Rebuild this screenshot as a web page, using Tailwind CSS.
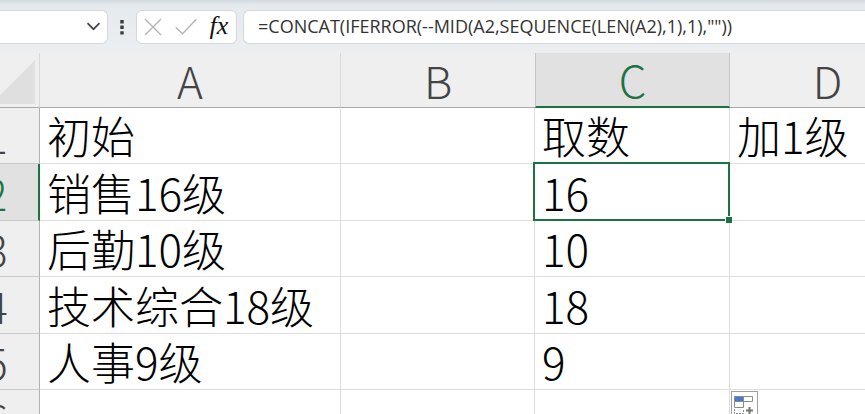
<!DOCTYPE html>
<html lang="zh-CN">
<head>
  <meta charset="UTF-8">
  <title>Workbook</title>
  <meta name="viewport" content="width=device-width, initial-scale=1.0">
  <script src="https://cdn.jsdelivr.net/npm/@tailwindcss/browser@4"></script>
</head>
<body class="h-screen flex flex-col overflow-hidden bg-white font-['Noto_Sans_CJK_SC',sans-serif]">

  <!-- Formula bar -->
  <header class="flex items-center shrink-0 h-[53px] bg-linear-to-b from-[#d3dae0] from-0% via-[#e5eaee] via-10% to-[#eceff1]">
    <button aria-label="Name box" class="flex items-center justify-end w-[108px] h-[34px] pr-[6px] bg-white border border-l-0 border-[#d4d8db] rounded-r-md">
      <svg class="w-[15px] h-[9px]" viewBox="0 0 15 9" fill="none" stroke="#444" stroke-width="1.7"><path d="M1.5 1.2 7.5 7.2 13.5 1.2"/></svg>
    </button>
    <svg class="w-7 h-4 shrink-0" viewBox="0 0 28 16" fill="#3b3b3b"><path d="M12.3 1h3.4v3.4h-3.4zM12.3 6.6h3.4v3.4h-3.4zM12.3 12.2h3.4v3.4h-3.4z"/></svg>
    <div class="flex items-center shrink-0 w-[101px] h-[34px] bg-white border border-[#d4d8db] rounded-md">
      <button aria-label="Cancel" class="w-8 flex justify-center">
        <svg class="w-[18px] h-[18px]" viewBox="0 0 18 18" fill="none" stroke="#b3b3b3" stroke-width="1.3"><path d="M1 1 17 17M17 1 1 17"/></svg>
      </button>
      <button aria-label="Enter" class="w-[34px] flex justify-center">
        <svg class="w-[22px] h-[18px]" viewBox="0 0 22 18" fill="none" stroke="#b3b3b3" stroke-width="1.3"><path d="M.7 9.2 7.5 15.8 21.3 1.2"/></svg>
      </button>
      <button aria-label="Insert function" class="w-8 pb-[2px] font-['Liberation_Serif',serif] italic font-medium text-[26px] leading-7 text-[#111]">fx</button>
    </div>
    <input type="text" aria-label="Formula" value='=CONCAT(IFERROR(--MID(A2,SEQUENCE(LEN(A2),1),1),""))'
      class="flex-1 min-w-0 h-[34px] ml-[6px] pl-[14px] pb-[2px] bg-white border border-r-0 border-[#d4d8db] rounded-l-md font-['Open_Sans',sans-serif] text-[18px] text-[#333] focus:outline-none">
  </header>

  <!-- Sheet, scrolled a little to the right -->
  <main class="flex-1 overflow-hidden">
    <table class="table-fixed border-separate border-spacing-0 -ml-[46px] w-[calc(100%+46px)] min-w-[971px] text-[44px] leading-[55px] font-light text-black
      [&_th]:p-0 [&_th]:font-light [&_th]:text-[#444] [&_thead_th]:border-b [&_thead_th]:border-b-[#a8a8a8] [&_thead_th]:leading-[54px]
      [&_tbody_th]:text-[42px] [&_tbody_th]:border-r [&_tbody_th]:border-b [&_tbody_th]:border-r-[#b0b0b0] [&_tbody_th]:border-b-[#c9c9c9] [&_tbody_th]:bg-[#efefef]
      [&_td]:h-14 [&_td]:py-0 [&_td]:pl-[7px] [&_td]:pr-0 [&_td]:border-r [&_td]:border-b [&_td]:border-[#dedede] [&_td]:whitespace-nowrap [&_tr:nth-child(even)>td]:h-[57px]">
      <colgroup>
        <col class="w-[86px]">
        <col class="w-[301px]">
        <col class="w-[194px]">
        <col class="w-[195px]">
        <col>
      </colgroup>
      <thead class="bg-[#efefef]">
        <tr>
          <th class="border-r border-r-[#dadada]">
            <button aria-label="Select all" class="flex items-end justify-end w-full h-[54px] pr-1 pb-[3px]">
              <svg class="w-11 h-11" viewBox="0 0 44 44" fill="#dfdfdf"><path d="M44 0V44H0z"/></svg>
            </button>
          </th>
          <th scope="col" class="border-r border-r-[#dadada]">A</th>
          <th scope="col">B</th>
          <th scope="col" class="bg-[#e1e1e1] border-x border-x-[#c4c4c4] border-b-2! border-b-[#1b7342]! text-[#1b7342]! leading-[53px]!">C</th>
          <th scope="col">D</th>
        </tr>
      </thead>
      <tbody>
        <tr><th scope="row">1</th><td>初始</td><td></td><td>取数</td><td>加1级</td></tr>
        <tr>
          <th scope="row" class="bg-[#e1e1e1]! text-[#1b7342]! border-r-2! border-r-[#1b7342]!">2</th>
          <td>销售16级</td>
          <td></td>
          <td class="relative">16
            <!-- selection frame and fill handle -->
            <span class="absolute -top-[2px] -left-[2px] -right-px -bottom-px border-2 border-[#1b7342]"></span>
            <span class="absolute -right-[3px] -bottom-[3px] size-[7px] bg-[#1b7342] border-t border-l border-white"></span>
          </td>
          <td></td>
        </tr>
        <tr><th scope="row">3</th><td>后勤10级</td><td></td><td>10</td><td></td></tr>
        <tr><th scope="row">4</th><td>技术综合18级</td><td></td><td>18</td><td></td></tr>
        <tr><th scope="row">5</th><td>人事9级</td><td></td><td>9</td><td></td></tr>
        <tr>
          <th scope="row">6</th><td></td><td></td><td></td>
          <td class="relative">
            <button aria-label="Auto fill options" class="absolute left-px top-px w-[27px] h-[27px] bg-white border border-[#a0a0a0]">
              <svg class="w-[25px] h-[25px]" viewBox="0 0 25 25" fill="none" stroke="#8a8a8a">
                <path d="M2.5 4.5h9v5h-9z" fill="#3d78e6"/>
                <path d="M11.5 4.5h9v5h-9zM2.5 9.5h9v6h-9z"/>
                <path d="M2.5 17v4.5h9V17" stroke-dasharray="2 1"/>
                <path d="M17.5 15v7M14 18.5h7" stroke-width="2" stroke="#777"/>
              </svg>
            </button>
          </td>
        </tr>
      </tbody>
    </table>
  </main>

</body>
</html>
